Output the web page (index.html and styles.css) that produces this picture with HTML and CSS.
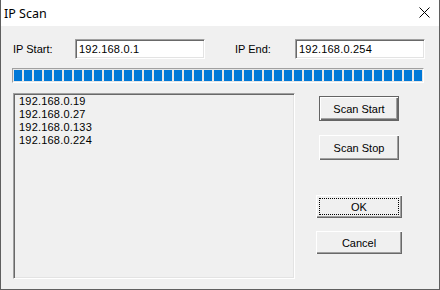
FILE: index.html
```html
<!DOCTYPE html>
<html lang="en">
<head>
    <meta charset="UTF-8">
    <title>IP Scan</title>
    <link rel="stylesheet" href="styles.css">
</head>
<body>
    <div class="window">
        <div class="titlebar">
            <span class="title">IP Scan</span>
            <span class="close">
                <svg width="11" height="11" viewBox="0 0 11 11">
                    <path d="M0.5 0.5 L10.5 10.5 M10.5 0.5 L0.5 10.5" stroke="#000" stroke-width="1" fill="none"/>
                </svg>
            </span>
        </div>

        <div class="client">
            <div class="ip-row">
                <label class="ip-label" for="ipStart">IP Start:</label>
                <input class="edit" id="ipStart" type="text" value="192.168.0.1">
                <label class="ip-label end" for="ipEnd">IP End:</label>
                <input class="edit" id="ipEnd" type="text" value="192.168.0.254">
            </div>

            <div class="progress">
                <div class="progress-fill"></div>
            </div>

            <div class="main">
                <div class="listbox">
                    <div class="list-item">192.168.0.19</div>
                    <div class="list-item">192.168.0.27</div>
                    <div class="list-item">192.168.0.133</div>
                    <div class="list-item">192.168.0.224</div>
                </div>

                <div class="buttons">
                    <button class="btn scan default">Scan Start</button>
                    <button class="btn scan stop">Scan Stop</button>
                    <button class="btn dlg ok focus">OK</button>
                    <button class="btn dlg cancel">Cancel</button>
                </div>
            </div>
        </div>
    </div>
</body>
</html>
```

FILE: styles.css
```css
html, body {
    margin: 0;
    padding: 0;
}
body {
    width: 440px;
    height: 290px;
    overflow: hidden;
    background-color: #f0f0f0;
}
.window {
    box-sizing: border-box;
    width: 440px;
    height: 290px;
    border: 1px solid #5f5f5f;
    border-top: none;
    background-color: #f0f0f0;
    display: flex;
    flex-direction: column;
}
.titlebar {
    height: 26px;
    flex: none;
    background-color: #fff;
    display: flex;
    align-items: center;
    justify-content: space-between;
    font-family: "Noto Sans", "Open Sans", sans-serif;
    font-size: 12.5px;
    color: #000;
}
.title {
    padding-left: 3px;
}
.close {
    display: flex;
    align-items: center;
    margin-right: 9px;
    padding-bottom: 1px;
}
.close svg {
    display: block;
}
.client {
    flex: 1;
    padding: 13px 0 0 12px;
    font-family: "Liberation Sans", Arial, sans-serif;
    font-size: 11px;
    color: #000;
}
.ip-row {
    display: flex;
    align-items: center;
    height: 20px;
}
.ip-label {
    width: 62px;
    flex: none;
}
.ip-label.end {
    width: 60px;
    margin-left: 30px;
}
.edit {
    box-sizing: border-box;
    width: 130px;
    height: 20px;
    margin: 0;
    padding: 0 3px;
    border-top: 1px solid #a0a0a0;
    border-left: 1px solid #a0a0a0;
    border-bottom: 1px solid #fff;
    border-right: 1px solid #fff;
    box-shadow: inset 1px 1px 0 #696969, inset -1px -1px 0 #e3e3e3;
    background-color: #fff;
    font-family: "Liberation Sans", Arial, sans-serif;
    font-size: 11px;
    letter-spacing: 0.2px;
    color: #000;
    outline: none;
}
.progress {
    box-sizing: border-box;
    width: 412px;
    height: 15px;
    margin: 9px 0 0 -1px;
    padding: 1px;
    border-top: 1px solid #a0a0a0;
    border-left: 1px solid #a0a0a0;
    border-bottom: 1px solid #fff;
    border-right: 1px solid #fff;
    background-color: #e6e6e6;
}
.progress-fill {
    height: 100%;
    width: 408px;
    background: repeating-linear-gradient(to right, #0078d7 0 8px, transparent 8px 10px);
}
.main {
    display: flex;
    margin-top: 10px;
}
.listbox {
    box-sizing: border-box;
    width: 282px;
    height: 186px;
    padding: 1px 4px;
    border-top: 1px solid #a0a0a0;
    border-left: 1px solid #a0a0a0;
    border-bottom: 1px solid #fff;
    border-right: 1px solid #fff;
    box-shadow: inset 1px 1px 0 #696969, inset -1px -1px 0 #e3e3e3;
    background-color: #f0f0f0;
}
.list-item {
    line-height: 13px;
    padding-left: 1px;
    letter-spacing: 0.2px;
}
.buttons {
    width: 86px;
    margin-left: 21px;
    display: flex;
    flex-direction: column;
    align-items: center;
    padding-top: 3px;
}
.btn {
    box-sizing: border-box;
    margin: 0;
    padding: 0;
    border: none;
    background-color: #f0f0f0;
    box-shadow: inset 1px 1px 0 #fff, inset -1px -1px 0 #696969, inset -2px -2px 0 #a0a0a0;
    font-family: "Liberation Sans", Arial, sans-serif;
    font-size: 11px;
    color: #000;
}
.btn.scan {
    width: 80px;
    height: 25px;
}
.btn.default {
    border: 1px solid #646464;
}
.btn.stop {
    margin-top: 14px;
}
.btn.dlg {
    width: 86px;
    height: 23px;
}
.btn.ok {
    margin-top: 35px;
}
.btn.cancel {
    margin-top: 13px;
}
.btn.focus {
    outline: 1px dotted #000;
    outline-offset: -4px;
}
```
